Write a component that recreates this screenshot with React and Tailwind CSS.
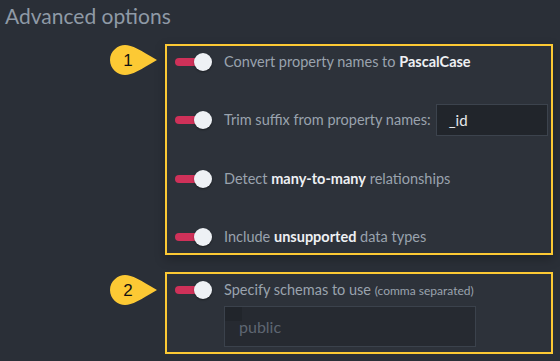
import React from "react";

function Marker({ n }) {
  return (
    <svg width="48" height="30" viewBox="0 0 48 30" className="block">
      <path
        d="M15 0 C8 0 0 6 0 15 C0 24 8 30 15 30 C22 30 30 25 47 15 C30 5 22 0 15 0 Z"
        fill="#fcc934"
      />
      <text
        x="18"
        y="21"
        textAnchor="middle"
        fontFamily="Liberation Sans, Arial, sans-serif"
        fontSize="17"
        fill="#111"
      >
        {n}
      </text>
    </svg>
  );
}

function Toggle() {
  return (
    <div className="relative w-[37px] h-[18px] shrink-0">
      <div className="absolute left-0 top-[5px] w-[26px] h-[8px] rounded-full bg-[#cf3159]" />
      <div className="absolute left-[19px] top-0 w-[18px] h-[18px] rounded-full bg-[#eef1f5] shadow-[0_1px_2px_rgba(0,0,0,0.4)]" />
    </div>
  );
}

function Row({ children, extra }) {
  return (
    <div className="flex items-center h-[32px] gap-[12px]">
      <Toggle />
      <div className="text-[14.5px] text-[#9aa3ae] whitespace-nowrap">{children}</div>
      {extra}
    </div>
  );
}

const B = ({ children }) => <span className="font-bold text-[#eef0f3]">{children}</span>;

export default function App() {
  return (
    <div
      className="w-[560px] h-[361px] overflow-hidden bg-[#2a2f37]"
      style={{ fontFamily: "Lato, 'Open Sans', sans-serif" }}
    >
      <div className="h-[44px] pl-[5px] pt-[1px] text-[21px] leading-[30px] text-[#8f9aa6]">
        Advanced options
      </div>

      <div className="flex">
        <div className="w-[165px] pl-[110px] pt-[1px] shrink-0">
          <Marker n="1" />
        </div>
        <div className="w-[388px] h-[211px] border-2 border-[#fcc934] bg-[#2d323a] shadow-[0_4px_10px_rgba(0,0,0,0.25)] pl-[8px] flex flex-col gap-[26.5px]">
          <Row>
            Convert property names to <B>PascalCase</B>
          </Row>
          <Row
            extra={
              <div className="-ml-[7px] w-[112px] h-[32px] shrink-0 bg-[#21252b] border border-[#3c434d] pl-[12px] flex items-center text-[15px] text-[#e6e8eb]">
                _id
              </div>
            }
          >
            Trim suffix from property names:
          </Row>
          <Row>
            Detect <B>many-to-many</B> relationships
          </Row>
          <Row>
            Include <B>unsupported</B> data types
          </Row>
        </div>
      </div>

      <div className="flex mt-[17px]">
        <div className="w-[165px] pl-[110px] pt-[3px] shrink-0">
          <Marker n="2" />
        </div>
        <div className="w-[388px] h-[82px] border-2 border-[#fcc934] bg-[#2d323a] pl-[8px]">
          <Row>
            Specify schemas to use <span className="text-[12px]">(comma separated)</span>
          </Row>
          <div className="relative ml-[49px] w-[252px] h-[41px] bg-[#262a31] border border-[#3b424c] pl-[14px] flex items-center text-[16px] text-[#5e6672]">
            <div className="absolute left-0 top-0 w-[17px] h-[14px] bg-[#21252b]" />
            public
          </div>
        </div>
      </div>
    </div>
  );
}
